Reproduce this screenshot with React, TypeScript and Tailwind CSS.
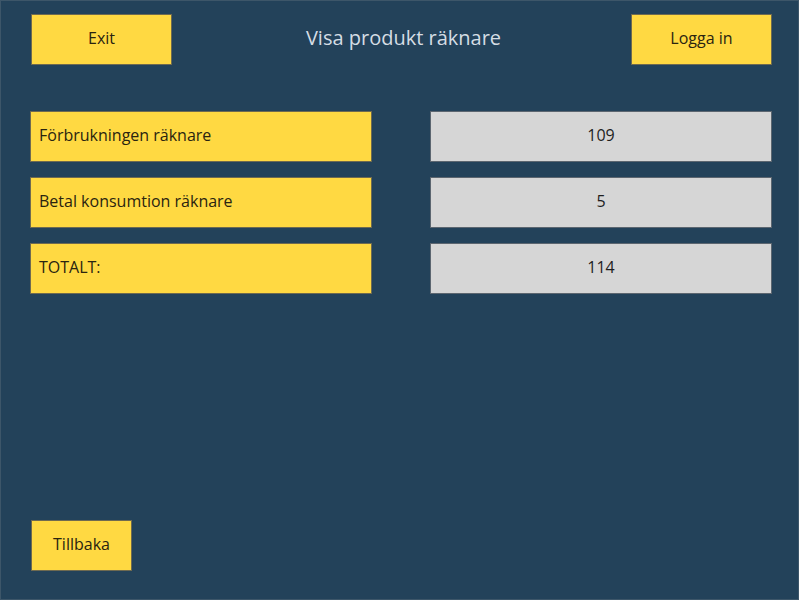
export default function App() {
  const rows = [
    { label: 'Förbrukningen räknare', value: '109' },
    { label: 'Betal konsumtion räknare', value: '5' },
    { label: 'TOTALT:', value: '114' },
  ];

  return (
    <div
      className="w-[799px] h-[600px] bg-[#23425a] border border-[#3d5669] flex flex-col pl-[29px] pr-[26px] pt-[13px] pb-[28px]"
      style={{ fontFamily: '"Open Sans", "Noto Sans", sans-serif' }}
    >
      <div className="flex items-center justify-between">
        <button className="w-[141px] h-[51px] ml-[1px] pb-[4px] bg-[#ffd942] border border-[#6f6a50] text-[#2a2410] text-base">
          Exit
        </button>
        <div className="text-[#d5dde4] text-[20px] pb-[4px] ml-[4px]">Visa produkt räknare</div>
        <button className="w-[141px] h-[51px] pb-[4px] bg-[#ffd942] border border-[#6f6a50] text-[#2a2410] text-base">
          Logga in
        </button>
      </div>

      <div className="mt-[46px] flex flex-col gap-[15px]">
        {rows.map((r) => (
          <div key={r.label} className="flex justify-between">
            <div className="w-[342px] h-[51px] pb-[4px] bg-[#ffd942] border border-[#6f6a50] flex items-center pl-[8px] text-[#2a2410] text-base">
              {r.label}
            </div>
            <div className="w-[342px] h-[51px] pb-[4px] bg-[#d6d6d6] border border-[#5c6670] flex items-center justify-center text-[#1e1e1e] text-base">
              {r.value}
            </div>
          </div>
        ))}
      </div>

      <div className="flex-1" />

      <div>
        <button className="w-[101px] h-[51px] ml-[1px] pb-[4px] bg-[#ffd942] border border-[#6f6a50] text-[#2a2410] text-base">
          Tillbaka
        </button>
      </div>
    </div>
  );
}
